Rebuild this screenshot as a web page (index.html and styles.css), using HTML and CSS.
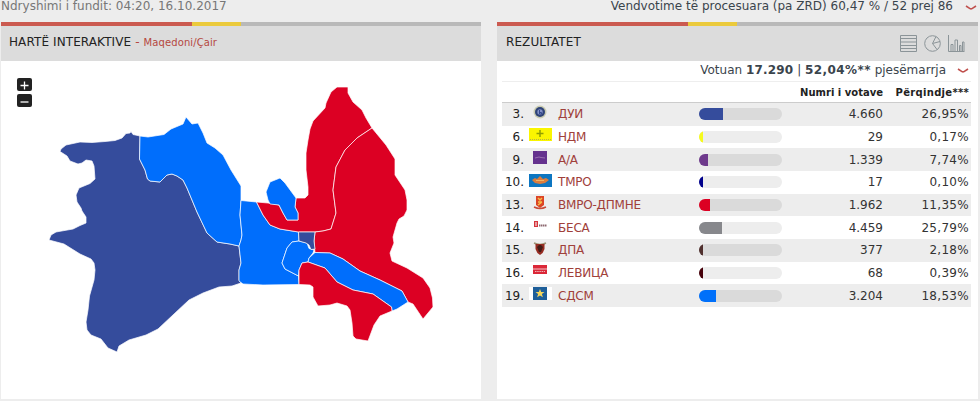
FILE: index.html
```
<!DOCTYPE html>
<html lang="sq">
<head>
    <meta charset="UTF-8">
    <title>Rezultatet - Çair</title>
    <link rel="stylesheet" href="styles.css">
</head>
<body>

<div class="topbar">
    <span class="updated">Ndryshimi i fundit: 04:20, 16.10.2017</span>
    <span class="processed">Vendvotime të procesuara (pa ZRD) 60,47 % / 52 prej 86</span>
    <svg class="chevron" width="12" height="6" viewBox="0 0 12 6"><path d="M1 1L5 3.600Q6 4.200 7 3.600L11 1"/></svg>
</div>

<div class="panels">
    <div class="panel">
        <div class="panel-head">
            <h2>HARTË INTERAKTIVE <span class="dash">-</span></h2>
            <span class="place">Maqedoni/Çair</span>
        </div>
        <div class="map">
            <div class="zoom">
                <button type="button"><svg width="15" height="13"><path d="M3.500 7.500h8M7.500 3.500v8"/></svg></button>
                <button type="button"><svg width="15" height="13"><path d="M3.500 8h8"/></svg></button>
            </div>
            <svg class="regions" width="480" height="338" viewBox="1 61 480 338">
                <path class="navy" d="M140 136L133 134.500L131 131.500L130 133L126 133.500L122 138L115 140.500L105 141.500L92 142.500L80 142L66 145L61 149L60 151.500L67 156L70 161L78 164L82 163L86 160L92 161L94 166L95 179L90 183.500L79 188L76 195L77 202L81 208L82 211L86 217L86 223L80 225.500L73 229L56 232L51 235L49 240L64 244L80 254L91 259L94 263L95 270L94 280L89.500 296L88 310L86 322L87 330L91 335L101 339L108 348L117 352L119 346L129 340L146 335L158 329L174 314L189 300L203 293L219 287L232 286L241 283L239 280L239 270L241 263L239 246L230 244L217 242L207 233L197 212L187 188L183 180L177 176L172 174L167 175L160 182L150 181L147.500 179L145 170L139.500 159Z"/>
                <path class="blue" d="M140 136L148 137L164 134.500L171 129L183 124L186 117L192 124L198 123L203 133L207 143L215 148L223 155L231 170L241 186L241 200L240 215L242 235L241 240L239 246L230 244L217 242L207 233L197 212L187 188L183 180L177 176L172 174L167 175L160 182L150 181L147.500 179L145 170L139.500 159Z"/>
                <path class="blue" d="M241 200.500L256.500 202L263 215L270 225L280 229L298.500 232L299 241L292 242L287 248L282 263L285 269L298.500 276L299 284.500L263 285L243 284L239 281L239 270L241 263L239 246L241 240L242 235L240 215Z"/>
                <path class="blue" d="M299 241L292 242L287 248L282 263L285 269L298.500 276L299 270L302 263L308 262L309 258L313 253L314 250L309 248.500L307 243Z"/>
                <path class="red" d="M256.500 202L268 203L279 205L283 213L287 220L298 220L298 213L295 207L296 198L305 198L308 195L308 187L306 170L306 153L308 140L310 129L313 121L325 108L326 103L331 92L337 87L348 87L348 93L353 102L362 110L366 118L372 128L357 138L345 150L336 167L333 190L336 213L331 229L323 231L315 232L298.500 232L280 229L270 225L263 215Z"/>
                <path class="red" d="M372 128L386 145L395 159L395 175L405 190L407 200L407 210L404 216L399 219L397 223L393 237L394 243L390 253L392 261L407 268L423 278L430 288L432.500 298L433 307L423 319L419 313L413 304L408 302L402 291L380 280L360 271L343 259L330 253L315 252.500L314 241L315 232L323 231L331 229L336 213L333 190L336 167L345 150L357 138Z"/>
                <path class="blue" d="M280 178L270 182L266 192L268 200L270 204L279 205L283 213L287 220L298 220L298 213L295 207L296 198L285 183Z"/>
                <path class="navy" d="M298.500 232L315 232L314 241L315 249L311 249.500L309 245L306 243L299 241Z"/>
                <path class="blue" d="M315 252.500L330 253L343 259L360 271L380 280L402 291L408 302L397 309L392 311L391.500 307L373 294L353 290L337 282L325 268L308 262L309 258Z"/>
                <path class="red" d="M308 262L325 268L337 282L353 290L373 294L391.500 307L392 311L380 316L374 325L371 333L368 341L356 339L353 336L352 323L350 310L347 306L337 303L330 305L318 306L313 297L313 287L310 285L299 284.500L299 270L302 263Z"/>
            </svg>
        </div>
    </div>

    <div class="panel">
        <div class="panel-head">
            <h2>REZULTATET</h2>
            <div class="views">
                <svg width="17" height="17" viewBox="0 0 17 17"><path d="M.5 .5h16v16h-16zM.5 3.500h16M.5 7h16M.5 10.500h16M.5 13.500h16"/></svg>
                <svg width="17" height="17" viewBox="0 0 17 17"><circle cx="8.500" cy="8.500" r="7.800"/><path d="M12 1.500L8.500 8.500L13 14.500M8.500 8.500L16 6.500"/></svg>
                <svg width="17" height="17" viewBox="0 0 17 17"><path d="M.5 0v16.500h16M3 16V9.500h2V16M7 16V5h2.500V16M11.500 16V10.500h1.500V16M14.500 16V7h1.500V16"/></svg>
            </div>
        </div>
        <div class="results">
            <div class="turnout">
                <span>Votuan <b class="total">17.290</b> | <b class="share">52,04%**</b> pjesëmarrja</span>
                <svg class="chevron" width="12" height="6" viewBox="0 0 12 6"><path d="M1 1L5 3.600Q6 4.200 7 3.600L11 1"/></svg>
            </div>
            <div class="row head">
                <span class="votes">Numri i votave</span>
                <span class="percent">Përqindje***</span>
            </div>
            <div class="row">
                <span class="num">3.</span>
                <svg class="logo" viewBox="0 0 24 16"><circle cx="11" cy="7" r="6.500" fill="#c9cbb0"/><circle cx="11" cy="7" r="5" fill="#2f4377"/><circle cx="11" cy="7" r="2.700" fill="#8290c8"/><path d="M10.500 5v4h2V7.500h-2" fill="none" stroke="#34498d"/></svg>
                <span class="party">ДУИ</span>
                <span class="bar"><i style="width:24px;background:#354c9c"></i></span>
                <span class="votes">4.660</span>
                <span class="percent">26,95%</span>
            </div>
            <div class="row">
                <span class="num">6.</span>
                <svg class="logo" viewBox="0 0 24 16"><path fill="#faf500" d="M0 1h23v13H0z"/><path stroke="#91a000" stroke-width="1.500" d="M11 3v7M7.500 6.500h7"/><path stroke="#b5b34a" stroke-dasharray="1 1" d="M1 12.500h21"/></svg>
                <span class="party">НДМ</span>
                <span class="bar"><i style="width:4px;background:#f5fa1e"></i></span>
                <span class="votes">29</span>
                <span class="percent">0,17%</span>
            </div>
            <div class="row">
                <span class="num">9.</span>
                <svg class="logo" viewBox="0 0 24 16"><path fill="#65328e" d="M4 1h14v13H4z"/><path stroke="#9970b0" d="M6 8l4-1 2 .5 4 .5" fill="none"/></svg>
                <span class="party">А/А</span>
                <span class="bar"><i style="width:9px;background:#6e3a8c"></i></span>
                <span class="votes">1.339</span>
                <span class="percent">7,74%</span>
            </div>
            <div class="row">
                <span class="num">10.</span>
                <svg class="logo" viewBox="0 0 24 16"><path fill="#0d76c1" d="M0 1h23v13H0z"/><path fill="#dd7c3c" d="M3 7l3-2 2 1 3-3 3 3 3-1 3 2-4 3-5 1-5-1z"/><path stroke="#f0b566" d="M7 7.500h8"/></svg>
                <span class="party">ТМРО</span>
                <span class="bar"><i style="width:4px;background:#00008c"></i></span>
                <span class="votes">17</span>
                <span class="percent">0,10%</span>
            </div>
            <div class="row">
                <span class="num">13.</span>
                <svg class="logo" viewBox="0 0 24 16"><path fill="#dc4424" d="M7 1h8v9l-4 3-4-3z"/><path stroke="#f4bd4c" stroke-width="1.500" fill="none" d="M9 3l2 2 2-2M9 7h4M9 10l4-3"/><path stroke="#c84a38" stroke-width="1.500" fill="none" d="M5 12q6 3 12 0"/></svg>
                <span class="party">ВМРО-ДПМНЕ</span>
                <span class="bar"><i style="width:11px;background:#dc0023"></i></span>
                <span class="votes">1.962</span>
                <span class="percent">11,35%</span>
            </div>
            <div class="row">
                <span class="num">14.</span>
                <svg class="logo" viewBox="0 0 24 16"><path fill="#d4343c" d="M5 3h4v6H5z"/><path stroke="#fff" d="M6 5h2M6 7h2"/><path stroke="#8d6970" stroke-width="2" stroke-dasharray="1.500 .5" d="M10 7.500h8"/></svg>
                <span class="party">БЕСА</span>
                <span class="bar"><i style="width:23px;background:#87888c"></i></span>
                <span class="votes">4.459</span>
                <span class="percent">25,79%</span>
            </div>
            <div class="row">
                <span class="num">15.</span>
                <svg class="logo" viewBox="0 0 24 16"><path stroke="#9c9275" stroke-width="1.500" fill="none" d="M5 2q6 3 12 0"/><path fill="#962c22" d="M6.500 3h9v5q-1 4-4.500 6-3.500-2-4.500-6z"/><path fill="#441c18" d="M10 4h2l2 2-2 5h-2L8 6z"/></svg>
                <span class="party">ДПА</span>
                <span class="bar"><i style="width:4px;background:#50302e"></i></span>
                <span class="votes">377</span>
                <span class="percent">2,18%</span>
            </div>
            <div class="row">
                <span class="num">16.</span>
                <svg class="logo" viewBox="0 0 24 16"><path fill="#db2738" d="M4 2h14v9H4z"/><path stroke="#f2c7c9" d="M4 6h14"/><path stroke="#eeb2b5" stroke-dasharray="1.500 .7" d="M6 8.500h10"/></svg>
                <span class="party">ЛЕВИЦА</span>
                <span class="bar"><i style="width:4px;background:#46000a"></i></span>
                <span class="votes">68</span>
                <span class="percent">0,39%</span>
            </div>
            <div class="row">
                <span class="num">19.</span>
                <svg class="logo" viewBox="0 0 24 16"><path fill="#fff" d="M0 1h23v13H0z"/><path fill="#1e5f9a" d="M4 1h14v13H4z"/><path fill="#f5d65c" d="M11 3l1.200 3h3.300l-2.600 2 1 3.300L11 9.500l-2.900 1.800 1-3.300-2.600-2h3.300z"/></svg>
                <span class="party">СДСМ</span>
                <span class="bar"><i style="width:17px;background:#0070fa"></i></span>
                <span class="votes">3.204</span>
                <span class="percent">18,53%</span>
            </div>
        </div>
    </div>
</div>

</body>
</html>
```
FILE: styles.css
```
* {
    box-sizing: border-box;
}
body {
    font-family: Verdana, "DejaVu Sans", sans-serif;
    font-size: 12px;
    margin: 0;
    height: 401px;
    overflow: hidden;
    background: #ededed;
    color: #333;
}
.topbar {
    display: flex;
    height: 22px;
    padding: 0 3px 0 1px;
    line-height: 13px;
}
.updated {
    color: #777;
}
.processed {
    margin-left: auto;
    color: #3a444c;
}
.chevron {
    fill: none;
    stroke: #c0504d;
    stroke-width: 1.6;
}
.topbar .chevron {
    margin: 5px 0 0 12px;
}
.panels {
    display: flex;
    gap: 16px;
    padding-left: 1px;
}
.panel {
    width: 480px;
    height: 377px;
    background: #fff;
}
.panel + .panel {
    width: 481px;
}
.panel-head {
    display: flex;
    align-items: center;
    height: 39px;
    padding: 4px 13px 0 8px;
    background: linear-gradient(90deg, #cb5a50 191px, #ebca3c 191px, #ebca3c 240px, #b9b9b9 240px) top / 100% 4px no-repeat #dcdcdc;
}
.panel + .panel .panel-head {
    padding-left: 9px;
}
.panel-head h2 {
    margin: 0;
    padding-bottom: 3px;
    font-size: 12px;
    font-weight: normal;
    letter-spacing: 0.1px;
    color: #222;
}
.dash, .place {
    color: #b5483f;
}
.place {
    padding: 0 0 2px 4px;
    font-size: 10px;
    letter-spacing: 0.1px;
}
.views {
    display: flex;
    gap: 7px;
    margin-left: auto;
}
.views svg {
    fill: none;
    stroke: #8b9498;
}
.map {
    position: relative;
}
.regions {
    display: block;
    stroke-width: 1;
    stroke-linejoin: round;
}
.navy {
    fill: #354c9c;
}
.blue {
    fill: #006efc;
}
.red {
    fill: #dc0023;
}
.regions path {
    stroke: rgba(255, 255, 255, 0.7);
}
.zoom {
    position: absolute;
    top: 17px;
    left: 16px;
    display: grid;
    gap: 3px;
}
.zoom button {
    display: block;
    width: 15px;
    height: 13px;
    padding: 0;
    border: 0;
    border-radius: 2px;
    background: #222;
}
.zoom svg {
    display: block;
    stroke: #fff;
    stroke-width: 1.3;
}
.results {
    padding: 0 7px 0 5px;
}
.turnout {
    display: flex;
    justify-content: flex-end;
    align-items: center;
    height: 21px;
    padding: 0 2px 3px 0;
    border-bottom: 1px solid #eee;
    color: #3a444c;
}
.total {
    letter-spacing: 0.2px;
}
.share {
    letter-spacing: 0.4px;
}
.turnout .chevron {
    margin: 3px 0 0 11px;
}
.row {
    display: grid;
    grid-template-columns: 22px 27px 148px 83px 101px 88px;
    align-items: center;
    height: 22.67px;
}
.row:nth-child(odd) {
    background: #ededed;
}
.row.head {
    height: 21px;
    border-bottom: 1px solid #ccc;
    font-size: 10px;
    font-weight: bold;
    color: #222;
}
.head .votes {
    grid-column: 5;
}
.num, .votes, .percent {
    text-align: right;
}
.num {
    color: #222;
}
.logo {
    width: 24px;
    height: 16px;
    margin: 0 0 3px 5px;
}
.party {
    padding-left: 7px;
    letter-spacing: -0.2px;
    color: #a0403a;
}
.bar {
    display: block;
    height: 12px;
    border-radius: 6px;
    overflow: hidden;
    background: #ededed;
}
.row:nth-child(odd) .bar {
    background: #dadada;
}
.bar i {
    display: block;
    height: 12px;
}
.percent {
    padding-right: 2px;
    letter-spacing: 0.3px;
}
```
